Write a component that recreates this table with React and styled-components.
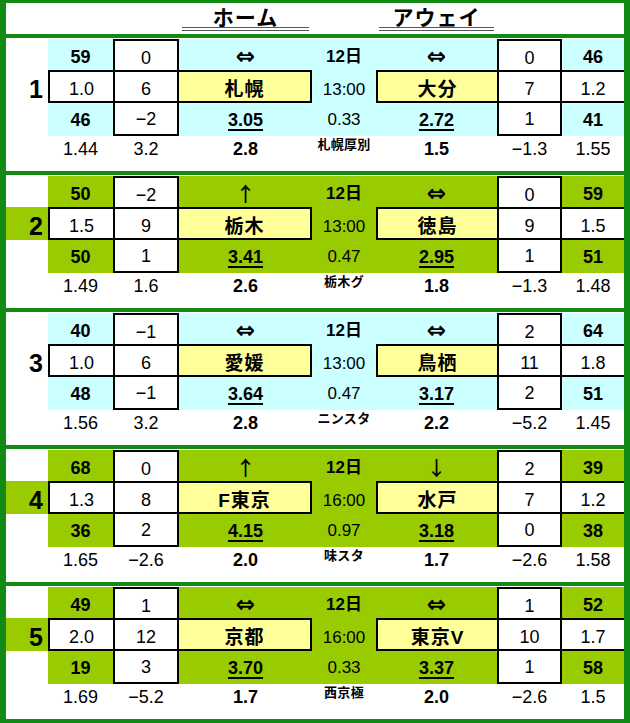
import React from 'react'
import styled, { createGlobalStyle } from 'styled-components'

const FRAME = '#138a13'
const BLUE = '#ccffff'
const LIME = '#99cc00'
const YELLOW = '#ffff99'
const COLS = '42px 65px 66px 133px 64px 121px 65px 62px'

const GlobalStyle = createGlobalStyle`
    body {
        margin: 0;
        background: #fff;
        font-family: "Liberation Sans", Arial, "Noto Sans CJK JP", sans-serif;
        color: #000;
    }
`

const Frame = styled.div`
    width: 630px;
    height: 723px;
    box-sizing: border-box;
    border-style: solid;
    border-color: ${FRAME};
    border-width: 3px 6px 4px 6px;
    background: #fff;
`

const HeaderRow = styled.div`
    display: grid;
    grid-template-columns: ${COLS};
    height: 31px;
`

const HeaderTitle = styled.div`
    grid-column: ${p => p.$col};
    align-self: end;
    margin: 0 3px 3px;
    text-align: center;
    font-family: "Noto Sans CJK JP", sans-serif;
    font-size: 21px;
    font-weight: 700;
    line-height: 22px;
    letter-spacing: 1px;
    border-bottom: 4px double #555;
`

const Block = styled.section`
    border-top: 4px solid ${FRAME};
    padding-top: 1px;
`

const Row = styled.div`
    display: grid;
    grid-template-columns: ${COLS};
    height: ${p => p.$h}px;
    & > * {
        padding-top: ${p => p.$pt || 0}px;
        align-items: ${p => (p.$top ? 'flex-start' : 'center')};
    }
`

const edge = side => p => (p.$edges && p.$edges.includes(side) ? '2px solid #000' : '0')

const Cell = styled.div`
    display: flex;
    justify-content: center;
    box-sizing: border-box;
    background: ${p => p.$bg || '#fff'};
    border-top: ${edge('t')};
    border-right: ${edge('r')};
    border-bottom: ${edge('b')};
    border-left: ${edge('l')};
    font-size: 18px;
    line-height: 1;
    font-weight: ${p => (p.$bold ? 700 : 400)};
    white-space: nowrap;
`

const NumCell = styled(Cell)`
    justify-content: flex-end;
    padding-right: 5px;
    font-size: 25px;
    font-weight: 700;
`

const TeamCell = styled(Cell)`
    font-family: "Liberation Sans", "Noto Sans CJK JP", sans-serif;
    font-weight: 700;
    font-size: 19px;
    letter-spacing: 1px;
`

const Value = styled.span`
    text-decoration: underline;
    text-decoration-thickness: 2px;
    text-underline-offset: 3px;
`

const Arrow = styled.span`
    font-family: ${p => (p.$wide ? '"DejaVu Sans"' : '"Noto Sans CJK JP"')}, sans-serif;
    font-weight: ${p => (p.$wide ? 700 : 500)};
    font-size: ${p => (p.$wide ? 23 : 20)}px;
    line-height: 1;
`

const MidCell = styled(Cell)`
    font-size: 17px;
`

const Venue = styled(Cell)`
    && {
        padding-top: 1px;
    }
    font-family: "Noto Sans CJK JP", sans-serif;
    font-size: 13px;
    font-weight: 700;
    letter-spacing: 0.3px;
`

const arrowOf = a => <Arrow $wide={a === '⇔'}>{a}</Arrow>

const matches = [
    {
        n: 1, c: BLUE, mid: ['12日', '13:00', '0.33', '札幌厚別'],
        home: { a: ['59', '1.0', '46', '1.44'], b: ['0', '6', '−2', '3.2'], t: ['⇔', '札幌', '3.05', '2.8'] },
        away: { a: ['46', '1.2', '41', '1.55'], b: ['0', '7', '1', '−1.3'], t: ['⇔', '大分', '2.72', '1.5'] },
    },
    {
        n: 2, c: LIME, mid: ['12日', '13:00', '0.47', '栃木グ'],
        home: { a: ['50', '1.5', '50', '1.49'], b: ['−2', '9', '1', '1.6'], t: ['↑', '栃木', '3.41', '2.6'] },
        away: { a: ['59', '1.5', '51', '1.48'], b: ['0', '9', '1', '−1.3'], t: ['⇔', '徳島', '2.95', '1.8'] },
    },
    {
        n: 3, c: BLUE, mid: ['12日', '13:00', '0.47', 'ニンスタ'],
        home: { a: ['40', '1.0', '48', '1.56'], b: ['−1', '6', '−1', '3.2'], t: ['⇔', '愛媛', '3.64', '2.8'] },
        away: { a: ['64', '1.8', '51', '1.45'], b: ['2', '11', '2', '−5.2'], t: ['⇔', '鳥栖', '3.17', '2.2'] },
    },
    {
        n: 4, c: LIME, mid: ['12日', '16:00', '0.97', '味スタ'],
        home: { a: ['68', '1.3', '36', '1.65'], b: ['0', '8', '2', '−2.6'], t: ['↑', 'F東京', '4.15', '2.0'] },
        away: { a: ['39', '1.2', '38', '1.58'], b: ['2', '7', '0', '−2.6'], t: ['↓', '水戸', '3.18', '1.7'] },
    },
    {
        n: 5, c: LIME, mid: ['12日', '16:00', '0.33', '西京極'],
        home: { a: ['49', '2.0', '19', '1.69'], b: ['1', '12', '3', '−5.2'], t: ['⇔', '京都', '3.70', '1.7'] },
        away: { a: ['52', '1.7', '58', '1.5'], b: ['1', '10', '1', '−2.6'], t: ['⇔', '東京V', '3.37', '2.0'] },
    },
]

const MatchBlock = ({ m }) => {
    const { c, home, away, mid } = m
    const numBg = c === LIME ? LIME : '#fff'
    return (
        <Block>
            <Row $h={31} $pt={4}>
                <Cell />
                <Cell $bg={c} $bold>{home.a[0]}</Cell>
                <Cell $edges="tlr">{home.b[0]}</Cell>
                <Cell $bg={c}>{arrowOf(home.t[0])}</Cell>
                <MidCell $bg={c} $bold>{mid[0]}</MidCell>
                <Cell $bg={c}>{arrowOf(away.t[0])}</Cell>
                <Cell $edges="tlr">{away.b[0]}</Cell>
                <Cell $bg={c} $bold>{away.a[0]}</Cell>
            </Row>
            <Row $h={33} $pt={5}>
                <NumCell $bg={numBg}>{m.n}</NumCell>
                <Cell $edges="tbl">{home.a[1]}</Cell>
                <Cell $edges="tblr">{home.b[1]}</Cell>
                <TeamCell $bg={YELLOW} $edges="tbr">{home.t[1]}</TeamCell>
                <MidCell $bg={c}>{mid[1]}</MidCell>
                <TeamCell $bg={YELLOW} $edges="tbl">{away.t[1]}</TeamCell>
                <Cell $edges="tblr">{away.b[1]}</Cell>
                <Cell $edges="tb">{away.a[1]}</Cell>
            </Row>
            <Row $h={33}>
                <Cell />
                <Cell $bg={c} $bold>{home.a[2]}</Cell>
                <Cell $edges="blr">{home.b[2]}</Cell>
                <Cell $bg={c} $bold><Value>{home.t[2]}</Value></Cell>
                <MidCell $bg={c}>{mid[2]}</MidCell>
                <Cell $bg={c} $bold><Value>{away.t[2]}</Value></Cell>
                <Cell $edges="blr">{away.b[2]}</Cell>
                <Cell $bg={c} $bold>{away.a[2]}</Cell>
            </Row>
            <Row $h={35} $pt={4} $top>
                <Cell />
                <Cell>{home.a[3]}</Cell>
                <Cell>{home.b[3]}</Cell>
                <Cell $bold>{home.t[3]}</Cell>
                <Venue>{mid[3]}</Venue>
                <Cell $bold>{away.t[3]}</Cell>
                <Cell>{away.b[3]}</Cell>
                <Cell>{away.a[3]}</Cell>
            </Row>
        </Block>
    )
}

export default function App() {
    return (
        <>
            <GlobalStyle />
            <Frame>
                <HeaderRow>
                    <HeaderTitle $col={4}>ホーム</HeaderTitle>
                    <HeaderTitle $col={6}>アウェイ</HeaderTitle>
                </HeaderRow>
                {matches.map(m => <MatchBlock key={m.n} m={m} />)}
            </Frame>
        </>
    )
}
